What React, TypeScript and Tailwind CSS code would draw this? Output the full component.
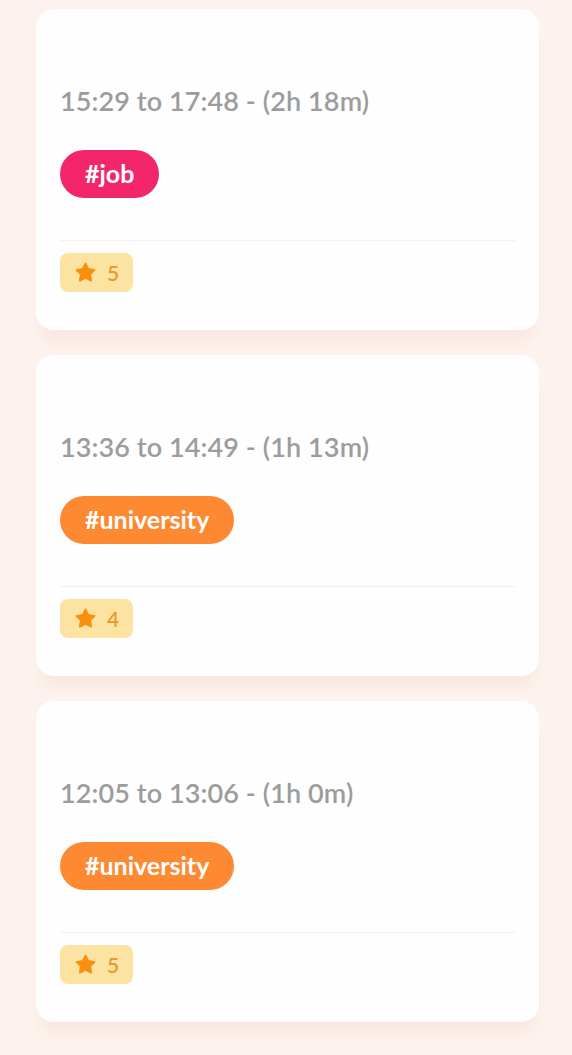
import { Star } from "lucide-react"

type Entry = { from: string; to: string; dur: string; tag: string; color: string; rating: number }

const entries: Entry[] = [
  { from: "15:29", to: "17:48", dur: "2h 18m", tag: "#job", color: "bg-[#f3266b]", rating: 5 },
  { from: "13:36", to: "14:49", dur: "1h 13m", tag: "#university", color: "bg-[#fd8933]", rating: 4 },
  { from: "12:05", to: "13:06", dur: "1h 0m", tag: "#university", color: "bg-[#fd8933]", rating: 5 },
]

function EntryCard({ e }: { e: Entry }) {
  return (
    <div className="bg-[#fefefe] rounded-[18px] pt-[76px] pb-[38px] px-6 shadow-[0_16px_14px_-6px_rgba(200,120,95,0.09)]">
      <div className="text-[27px] leading-[32px] font-semibold text-[#9c9c9c] tracking-[0.1px]">
        {e.from} to {e.to} - ({e.dur})
      </div>
      <div className="mt-[33px] flex">
        <span className={`${e.color} h-12 rounded-full px-[25px] flex items-center text-white font-bold text-[25px]`}>
          {e.tag}
        </span>
      </div>
      <div className="mt-[42px] border-t border-[#f1f1f1]" />
      <div className="mt-[12px] flex">
        <span className="h-[39px] rounded-[8px] bg-[#fde3a2] pl-[14px] pr-[14px] flex items-center gap-[10px]">
          <Star className="w-[23px] h-[23px] text-[#f7900e]" fill="currentColor" strokeWidth={1} />
          <span className="text-[21px] font-semibold text-[#e69a2e]">{e.rating}</span>
        </span>
      </div>
    </div>
  )
}

export default function App() {
  return (
    <div className="min-h-[1055px] bg-[#fdf2ed] px-9 pt-[9px] font-['Lato',sans-serif]">
      <div className="flex flex-col gap-[25px] w-[503px]">
        {entries.map((e, i) => <EntryCard key={i} e={e} />)}
      </div>
    </div>
  )
}
